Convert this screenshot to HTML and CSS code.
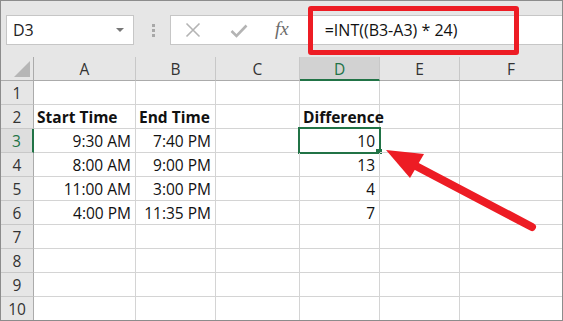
FILE: index.html
```html
<!DOCTYPE html>
<html>
<head>
<meta charset="utf-8">
<link rel="stylesheet" href="styles.css">
</head>
<body>
<div class="app">
  <div class="fbar">
    <div class="namebox"><span class="nb-text">D3</span><span class="nb-caret"></span></div>
    <div class="dots"><i></i><i></i><i></i></div>
    <div class="fbox">
      <svg class="ico ico-x" width="16" height="16" viewBox="0 0 16 16"><path d="M1.5 1.5 L14.5 14.5 M14.5 1.5 L1.5 14.5" stroke="#b4b4b4" stroke-width="1.6" fill="none"/></svg>
      <svg class="ico ico-check" width="18" height="14" viewBox="0 0 18 14"><path d="M1.5 7 L6.5 12 L16.5 1.5" stroke="#b4b4b4" stroke-width="2.6" fill="none"/></svg>
      <span class="fx">fx</span>
      <span class="formula">=INT((B3-A3) * 24)</span>
    </div>
    <div class="redbox"></div>
  </div>
  <div class="grid">
    <div class="corner"><span class="tri"></span></div>
    <div class="ch">A</div><div class="ch">B</div><div class="ch">C</div><div class="ch sel">D</div><div class="ch">E</div><div class="ch last">F</div>

    <div class="rh">1</div><div class="c"></div><div class="c"></div><div class="c"></div><div class="c"></div><div class="c"></div><div class="c last"></div>
    <div class="rh">2</div><div class="c b">Start Time</div><div class="c b">End Time</div><div class="c"></div><div class="c b">Difference</div><div class="c"></div><div class="c last"></div>
    <div class="rh sel">3</div><div class="c r">9:30 AM</div><div class="c r">7:40 PM</div><div class="c"></div><div class="c r active">10<span class="selbox"></span><span class="handle"></span></div><div class="c"></div><div class="c last"></div>
    <div class="rh">4</div><div class="c r">8:00 AM</div><div class="c r">9:00 PM</div><div class="c"></div><div class="c r">13</div><div class="c"></div><div class="c last"></div>
    <div class="rh">5</div><div class="c r">11:00 AM</div><div class="c r">3:00 PM</div><div class="c"></div><div class="c r">4</div><div class="c"></div><div class="c last"></div>
    <div class="rh">6</div><div class="c r">4:00 PM</div><div class="c r">11:35 PM</div><div class="c"></div><div class="c r">7</div><div class="c"></div><div class="c last"></div>
    <div class="rh">7</div><div class="c"></div><div class="c"></div><div class="c"></div><div class="c"></div><div class="c"></div><div class="c last"></div>
    <div class="rh">8</div><div class="c"></div><div class="c"></div><div class="c"></div><div class="c"></div><div class="c"></div><div class="c last"></div>
    <div class="rh">9</div><div class="c"></div><div class="c"></div><div class="c"></div><div class="c"></div><div class="c"></div><div class="c last"></div>
    <div class="rh">10</div><div class="c"></div><div class="c"></div><div class="c"></div><div class="c"></div><div class="c"></div><div class="c last"></div>
  </div>
  <svg class="arrow" width="563" height="321" viewBox="0 0 563 321">
    <line x1="414" y1="165" x2="532" y2="227" stroke="#ed1c24" stroke-width="8" stroke-linecap="round"/>
    <polygon points="386,150 424,154 410,178" fill="#ed1c24"/>
  </svg>
</div>
</body>
</html>
```

FILE: styles.css
```css
* { box-sizing: border-box; }
html, body { margin: 0; padding: 0; background: #fff; }
body { width: 563px; height: 321px; overflow: hidden; }

.app {
  position: relative;
  width: 563px;
  height: 321px;
  border: 1px solid #8c8c8c;
  overflow: hidden;
  background: #e6e6e6;
  font-family: "Open Sans", "Liberation Sans", sans-serif;
}

.fbar {
  height: 56px;
  display: flex;
  align-items: flex-start;
  padding: 14px 0 0 5px;
  background: #e6e6e6;
}

.namebox {
  width: 128px;
  height: 30px;
  background: #fff;
  border: 1px solid #c6c6c6;
  display: flex;
  align-items: center;
  justify-content: space-between;
  padding: 0 9px 0 6px;
}
.nb-text { font-size: 16px; color: #222; }
.nb-caret {
  width: 0; height: 0;
  border-left: 4px solid transparent;
  border-right: 4px solid transparent;
  border-top: 4px solid #777;
}

.dots {
  width: 36px;
  height: 30px;
  display: flex;
  flex-direction: column;
  align-items: center;
  justify-content: center;
  gap: 2px;
  padding-left: 2px;
}
.dots i { display: block; width: 3px; height: 3px; background: #a8a8a8; }

.fbox {
  flex: 1;
  height: 30px;
  background: #fff;
  border: 1px solid #c6c6c6;
  border-right: none;
  display: flex;
  align-items: center;
  padding-left: 14px;
}
.ico { display: block; flex: none; }
.ico-x { margin-right: 29px; }
.ico-check { margin-right: 27px; margin-top: 2px; }
.fx {
  font-family: "Liberation Serif", serif;
  font-style: italic;
  font-size: 19px;
  color: #6b6b6b;
  margin-right: 36px;
  margin-top: -3px;
}
.formula { font-size: 16px; color: #111; white-space: nowrap; }

.redbox {
  position: absolute;
  left: 307px;
  top: 5px;
  width: 211px;
  height: 49px;
  border: 5px solid #ed1c24;
  border-radius: 3px;
}

.grid {
  display: grid;
  grid-template-columns: 33px 102px 80px 84px 80px 80px 1fr;
  grid-template-rows: 24px repeat(10, 24px);
  background: #fff;
}

.corner, .ch, .rh {
  background: #e6e6e6;
  color: #333;
  font-size: 15.5px;
  display: flex;
  align-items: center;
  justify-content: center;
}
.corner {
  border-right: 1px solid #ababab;
  border-bottom: 1px solid #ababab;
  position: relative;
}
.tri {
  position: absolute;
  right: 3px;
  bottom: 3px;
  width: 0; height: 0;
  border-left: 16px solid transparent;
  border-bottom: 16px solid #b6b6b6;
}
.ch {
  border-right: 1px solid #c8c8c8;
  border-bottom: 1px solid #ababab;
  padding-top: 1px;
}
.ch.last { border-right: none; }
.ch.sel {
  background: #d2d2d2;
  color: #217346;
  border-bottom: 2px solid #217346;
}
.rh {
  border-right: 1px solid #ababab;
  border-bottom: 1px solid #c8c8c8;
  padding-top: 1px;
}
.rh.sel {
  color: #217346;
  border-right: 2px solid #217346;
  background: #dedede;
}

.c {
  position: relative;
  border-right: 1px solid #d4d4d4;
  border-bottom: 1px solid #d4d4d4;
  font-size: 15.5px;
  color: #111;
  display: flex;
  align-items: center;
  white-space: nowrap;
  padding: 1px 4px 0 3px;
}
.c.last { border-right: none; }
.c.b { font-weight: 700; }
.c.r { justify-content: flex-end; }

.selbox {
  position: absolute;
  left: -2px;
  top: -2px;
  width: 83px;
  height: 27px;
  border: 2px solid #217346;
  pointer-events: none;
}
.handle {
  position: absolute;
  left: 76px;
  top: 20px;
  width: 6px;
  height: 5px;
  background: #217346;
}

.arrow {
  position: absolute;
  left: -1px;
  top: -1px;
  pointer-events: none;
}
```
